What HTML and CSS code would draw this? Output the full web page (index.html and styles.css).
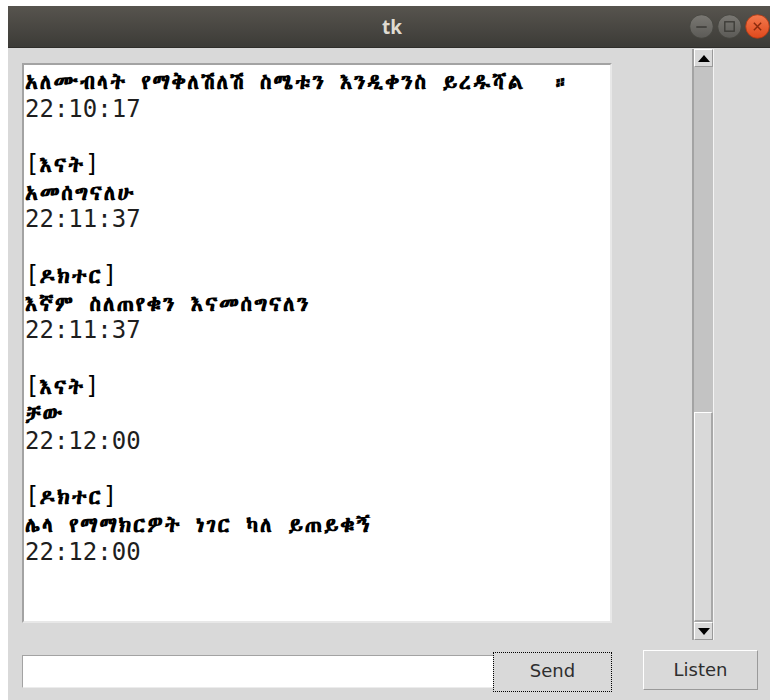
FILE: index.html
```html
<!DOCTYPE html>
<html lang="am">
<head>
<meta charset="utf-8">
<title>tk</title>
<link rel="stylesheet" href="styles.css">
</head>
<body>
<div class="window">
  <header class="titlebar">
    <span class="title">tk</span>
    <div class="controls">
      <svg class="ctl" width="25" height="25" viewBox="0 0 24 24">
        <defs>
          <linearGradient id="g-grey" x1="0" y1="0" x2="0" y2="1">
            <stop offset="0" stop-color="#7a7873"/>
            <stop offset="1" stop-color="#5b5a56"/>
          </linearGradient>
          <linearGradient id="g-red" x1="0" y1="0" x2="0" y2="1">
            <stop offset="0" stop-color="#f47a4e"/>
            <stop offset="1" stop-color="#e0491c"/>
          </linearGradient>
        </defs>
        <circle cx="12" cy="12" r="11.3" fill="url(#g-grey)" stroke="#45443f" stroke-width="0.8"/>
        <path d="M7 12.5h10" stroke="#3c3b37" stroke-width="1.5"/>
      </svg>
      <svg class="ctl" width="25" height="25" viewBox="0 0 24 24">
        <circle cx="12" cy="12" r="11.3" fill="url(#g-grey)" stroke="#45443f" stroke-width="0.8"/>
        <rect x="7.5" y="7.5" width="9" height="9" fill="none" stroke="#3c3b37" stroke-width="1.3"/>
      </svg>
      <svg class="ctl" width="25" height="25" viewBox="0 0 24 24">
        <circle cx="12" cy="12" r="11.3" fill="url(#g-red)" stroke="#b03a14" stroke-width="0.8"/>
        <path d="M8.5 8.5l7 7M15.5 8.5l-7 7" stroke="#8a2a0c" stroke-width="1.4"/>
      </svg>
    </div>
  </header>

  <main class="chat">
    <div class="textbox">
      <div class="log">
        <div class="line"><span class="am">አለሙብላት</span> <span class="am">የማቅለሽለሽ</span> <span class="am">ስሜቱን</span> <span class="am">እንዲቀንስ</span> <span class="am">ይረዱሻል</span>  <span class="am">።</span></div>
        <div class="line time">22:10:17</div>
        <div class="line"></div>
        <div class="line">[<span class="am">እናት</span>]</div>
        <div class="line"><span class="am">አመሰግናለሁ</span></div>
        <div class="line time">22:11:37</div>
        <div class="line"></div>
        <div class="line">[<span class="am">ዶክተር</span>]</div>
        <div class="line"><span class="am">እኛም</span> <span class="am">ስለጠየቁን</span> <span class="am">እናመሰግናለን</span></div>
        <div class="line time">22:11:37</div>
        <div class="line"></div>
        <div class="line">[<span class="am">እናት</span>]</div>
        <div class="line"><span class="am">ቻው</span></div>
        <div class="line time">22:12:00</div>
        <div class="line"></div>
        <div class="line">[<span class="am">ዶክተር</span>]</div>
        <div class="line"><span class="am">ሌላ</span> <span class="am">የማማክርዎት</span> <span class="am">ነገር</span> <span class="am">ካለ</span> <span class="am">ይጠይቁኝ</span></div>
        <div class="line time">22:12:00</div>
      </div>
    </div>

    <div class="scrollbar">
      <div class="arrow">
        <svg width="12" height="7" viewBox="0 0 12 7"><path d="M0 7L6 0L12 7Z" fill="#000"/></svg>
      </div>
      <div class="trough">
        <div class="slider"></div>
      </div>
      <div class="arrow">
        <svg width="12" height="7" viewBox="0 0 12 7"><path d="M0 0L12 0L6 7Z" fill="#000"/></svg>
      </div>
    </div>
  </main>

  <footer class="controls-row">
    <div class="entry"></div>
    <button class="btn send">Send</button>
    <button class="btn listen">Listen</button>
  </footer>
</div>
</body>
</html>
```

FILE: styles.css
```css
html, body {
  margin: 0;
  padding: 0;
  background: #ffffff;
}

.window {
  margin: 6px 0 0 8px;
  width: 762px;
  height: 694px;
  background: #d9d9d9;
  display: flex;
  flex-direction: column;
  overflow: hidden;
}

/* window manager title bar */
.titlebar {
  height: 42px;
  flex: none;
  display: flex;
  align-items: center;
  justify-content: center;
  position: relative;
  background: linear-gradient(#57544e, #3c3b37);
  border-bottom: 1px solid #2f2e2b;
  box-sizing: border-box;
}

.title {
  font-family: "Open Sans", "DejaVu Sans", sans-serif;
  font-weight: 700;
  font-size: 19px;
  color: #dfdbd2;
  margin-left: 6px;
}

.controls {
  position: absolute;
  right: 0;
  top: 8px;
  display: flex;
  gap: 3px;
}

.ctl {
  display: block;
}

/* chat log + scrollbar */
.chat {
  display: flex;
  align-items: flex-start;
  padding-left: 14px;
  height: 592px;
  flex: none;
}

.textbox {
  margin-top: 15px;
  width: 590px;
  height: 560px;
  box-sizing: border-box;
  background: #ffffff;
  border-top: 2px solid #a3a3a3;
  border-left: 2px solid #a3a3a3;
  border-right: 2px solid #e8e8e8;
  border-bottom: 2px solid #e8e8e8;
  overflow: hidden;
}

.log {
  padding: 3px 0 0 1px;
  font-family: "DejaVu Sans Mono", "Abyssinica SIL", "FreeSerif", monospace;
  font-size: 24px;
  color: #000;
}

/* every text line has the same fixed height, whatever face it uses */
.line {
  height: 27.7px;
  line-height: 27.7px;
  white-space: pre;
  overflow: visible;
}

/* Ethiopic runs come from the fallback face: smaller and heavier */
.line .am {
  font-family: "Abyssinica SIL", "Noto Sans Ethiopic", "FreeSerif", serif;
  font-size: 21px;
  font-weight: 700;
  letter-spacing: 1.9px;
}

.line.time {
  color: #1e1e1e;
}

.scrollbar {
  margin-left: 80px;
  margin-top: 1px;
  width: 22px;
  height: 591px;
  box-sizing: border-box;
  border-left: 2px solid #a3a3a3;
  border-right: 1px solid #f4f4f4;
  display: flex;
  flex-direction: column;
  background: #c3c3c3;
}

.arrow {
  height: 18px;
  flex: none;
  display: flex;
  align-items: center;
  justify-content: center;
  background: #d9d9d9;
  box-sizing: border-box;
  border-top: 1px solid #ffffff;
  border-left: 1px solid #ffffff;
  border-right: 1px solid #9a9a9a;
  border-bottom: 1px solid #9a9a9a;
}

.trough {
  flex: 1;
  display: flex;
  flex-direction: column;
  justify-content: flex-end;
}

.slider {
  height: 210px;
  background: #d9d9d9;
  box-sizing: border-box;
  border-top: 1px solid #ffffff;
  border-left: 1px solid #ffffff;
  border-right: 2px solid #a8a8a8;
  border-bottom: 2px solid #a8a8a8;
}

/* input row */
.controls-row {
  display: flex;
  align-items: flex-start;
  padding: 10px 0 0 14px;
}

.entry {
  margin-top: 5px;
  width: 472px;
  height: 33px;
  box-sizing: border-box;
  background: #ffffff;
  border-top: 1px solid #a3a3a3;
  border-left: 1px solid #a3a3a3;
  border-right: 1px solid #ececec;
  border-bottom: 1px solid #ececec;
}

.btn {
  height: 40px;
  box-sizing: border-box;
  background: #d9d9d9;
  font-family: "DejaVu Sans", sans-serif;
  font-size: 18px;
  color: #2e2e2e;
  padding: 0;
  border-top: 1px solid #ffffff;
  border-left: 1px solid #ffffff;
  border-right: 1px solid #9a9a9a;
  border-bottom: 1px solid #9a9a9a;
  display: flex;
  align-items: center;
  justify-content: center;
}

.send {
  width: 119px;
  margin-top: 2px;
  margin-left: -1px;
  border: 1px dotted #000;
  padding-bottom: 4px;
}

.listen {
  width: 115px;
  margin-left: 31px;
  padding-bottom: 2px;
}
```
